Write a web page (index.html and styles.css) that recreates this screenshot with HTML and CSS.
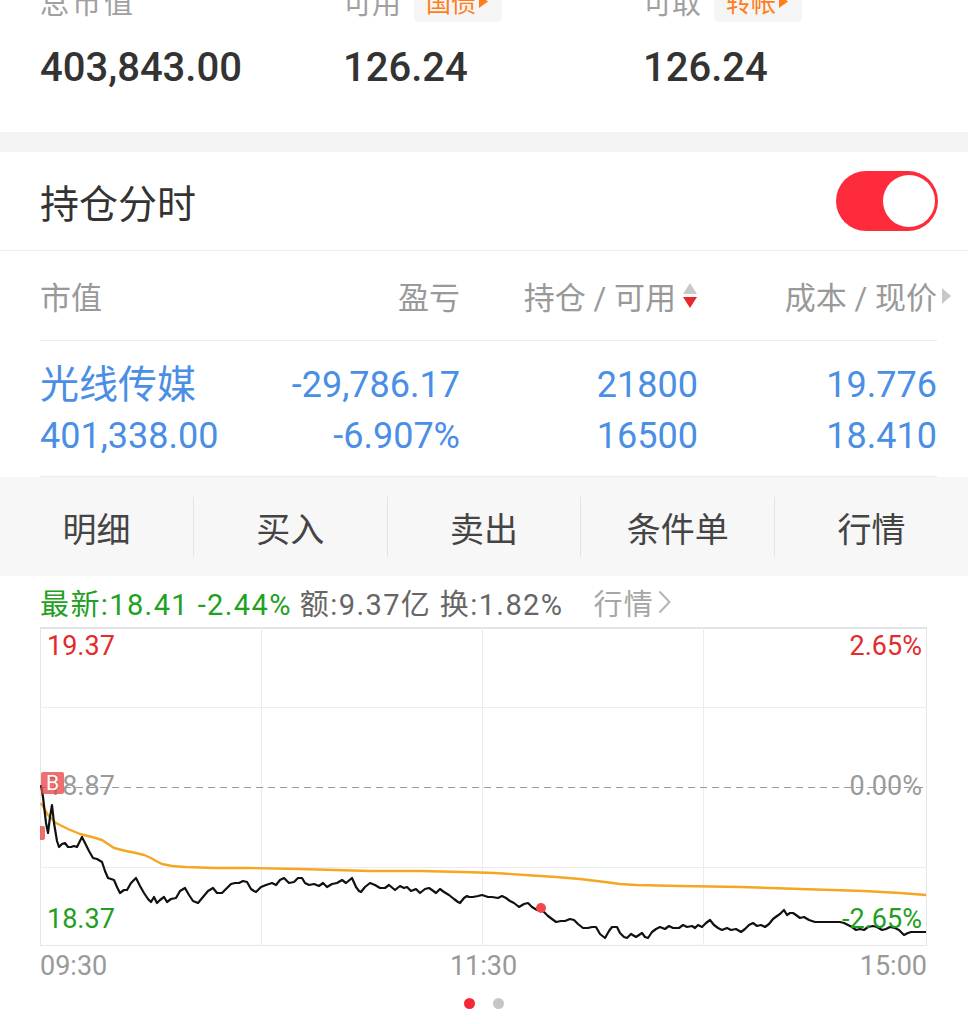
FILE: index.html
```html
<!DOCTYPE html>
<html lang="zh-CN">
<head>
<meta charset="utf-8">
<title>持仓分时</title>
<link rel="stylesheet" href="styles.css">
</head>
<body>
<div class="page">
  <section class="summary">
    <div class="sum-col">
      <div class="sum-label"><span class="wide">总市值</span></div>
      <div class="sum-value">403,843.00</div>
    </div>
    <div class="sum-col">
      <div class="sum-label"><span>可用</span><span class="tag">国债<svg class="tag-arrow" width="9" height="13" viewBox="0 0 9 13"><path d="M0 0 L9 6.5 L0 13 Z" fill="#ff7d1a"/></svg></span></div>
      <div class="sum-value">126.24</div>
    </div>
    <div class="sum-col">
      <div class="sum-label"><span>可取</span><span class="tag">转帐<svg class="tag-arrow" width="9" height="13" viewBox="0 0 9 13"><path d="M0 0 L9 6.5 L0 13 Z" fill="#ff7d1a"/></svg></span></div>
      <div class="sum-value">126.24</div>
    </div>
  </section>

  <div class="gap-band"></div>

  <section class="title-row">
    <h2 class="title">持仓分时</h2>
    <div class="toggle"><span class="knob"></span></div>
  </section>

  <section class="holdings">
    <div class="hold-head">
      <span class="c1">市值</span>
      <span class="c2">盈亏</span>
      <span class="c3">持仓 / 可用<svg class="sort" width="16" height="28" viewBox="0 0 16 28"><path d="M8 1 L15 12 L1 12 Z" fill="#c8c8c8"/><path d="M1 15 L15 15 L8 26 Z" fill="#e8282d"/></svg></span>
      <span class="c4">成本 / 现价<svg class="more" width="9" height="16" viewBox="0 0 9 16"><path d="M0 0 L9 8 L0 16 Z" fill="#c8c8c8"/></svg></span>
    </div>
    <div class="hold-row">
      <span class="c1 name">光线传媒</span>
      <span class="c2">-29,786.17</span>
      <span class="c3">21800</span>
      <span class="c4">19.776</span>
      <span class="c1">401,338.00</span>
      <span class="c2">-6.907%</span>
      <span class="c3">16500</span>
      <span class="c4">18.410</span>
    </div>
  </section>

  <nav class="actions">
    <span class="act">明细</span>
    <span class="act">买入</span>
    <span class="act">卖出</span>
    <span class="act">条件单</span>
    <span class="act">行情</span>
  </nav>

  <div class="quote">
    <span class="q-up">最新:18.41 -2.44%</span>
    <span class="q-info">额:9.37亿 换:1.82%</span>
    <span class="q-link">行情<svg class="q-arrow" width="13" height="24" viewBox="0 0 13 24"><path d="M1.5 1.5 L11.5 12 L1.5 22.5" fill="none" stroke="#b5b5b5" stroke-width="2"/></svg></span>
  </div>

  <div class="chart">
    <svg class="chart-svg" width="887" height="319" viewBox="0 0 887 319">
      <rect x="0.5" y="0.5" width="886" height="318" fill="#fff" stroke="#e6e6e6" stroke-width="1"/>
      <line x1="0" y1="1" x2="887" y2="1" stroke="#e3e3e3" stroke-width="2"/>
      <line x1="0" y1="80.5" x2="887" y2="80.5" stroke="#ececec"/>
      <line x1="0" y1="240.5" x2="887" y2="240.5" stroke="#ececec"/>
      <line x1="221.5" y1="0" x2="221.5" y2="319" stroke="#ececec"/>
      <line x1="442.5" y1="0" x2="442.5" y2="319" stroke="#ececec"/>
      <line x1="663.5" y1="0" x2="663.5" y2="319" stroke="#ececec"/>
      <line x1="0" y1="160.5" x2="887" y2="160.5" stroke="#9a9a9a" stroke-dasharray="7 5"/>
      <polyline fill="none" stroke="#f5a623" stroke-width="2.4" stroke-linejoin="round"
        points="1,176 8,188 16,196 28,202 40,207 52,210 62,213 68,217 74,221 86,224 96,226 104,228 111,231 116,234 122,237 132,239 145,240 175,241 207,241 260,242 330,244 380,244 423,245 455,246 485,248 516,250 540,252 565,255 580,257 596,258 640,259 701,260 760,262 824,264 860,266 886,268"/>
      <polyline fill="none" stroke="#111" stroke-width="2.2" stroke-linejoin="round"
        points="1,158 3,170 6,196 8,206 10,190 12,178 14,196 17,214 19,220 22,217 25,216 28,220 31,220 34,219 37,220 40,214 42,210 45,216 49,224 53,231 57,232 62,235 65,244 68,251 71,252 74,253 77,260 80,266 84,263 87,263 91,256 96,251 100,259 104,266 108,272 111,275 114,270 117,276 120,273 124,270 127,275 131,272 136,271 140,264 145,261 149,268 153,274 158,276 163,270 168,264 173,261 177,266 182,266 186,262 191,257 195,256 199,256 203,254 207,255 211,262 214,264 216,265 221,260 226,258 232,256 236,258 240,253 244,251 249,256 254,255 258,251 262,251 265,256 269,258 274,257 279,259 283,256 287,260 292,257 297,256 302,253 306,256 312,251 316,260 319,264 321,265 325,260 330,256 335,258 340,261 345,261 349,258 355,263 360,259 364,261 367,260 371,264 376,262 380,266 385,262 389,261 392,263 396,266 400,262 404,265 409,268 414,272 418,275 420,276 424,271 427,269 429,270 433,270 438,269 442,268 448,270 452,270 458,271 462,269 466,271 470,274 474,276 479,280 484,277 488,276 492,280 497,283 501,281 504,285 508,289 512,292 516,295 521,294 525,294 530,292 534,293 538,297 543,301 548,301 552,300 556,300 560,307 565,311 569,304 572,300 577,300 580,306 584,310 587,311 591,307 596,310 599,308 602,306 605,310 608,311 612,305 616,302 620,300 625,302 629,299 633,301 639,301 643,298 647,300 652,299 655,301 658,298 662,300 666,296 670,293 674,298 678,301 682,303 687,301 691,303 696,302 701,305 705,302 709,298 713,296 717,299 721,298 725,300 729,297 733,292 737,289 740,287 744,283 747,288 750,286 753,286 756,288 760,291 764,290 769,293 772,294 775,295 785,295 795,295 800,295 804,296 808,298 812,300 816,303 820,302 824,303 828,300 833,299 837,300 842,303 846,302 850,300 855,301 859,303 862,306 864,308 868,306 871,305 876,305 886,305"/>
      <circle cx="501" cy="281" r="5" fill="#f04848"/>
    </svg>
    <span class="cl cl-tl up">19.37</span>
    <span class="cl cl-tr up">2.65%</span>
    <span class="cl cl-ml">18.87</span>
    <span class="cl cl-mr">0.00%</span>
    <span class="cl cl-bl down">18.37</span>
    <span class="cl cl-br down">-2.65%</span>
    <span class="mark-b">B</span>
    <span class="mark-s"></span>
  </div>

  <div class="time-axis">
    <span>09:30</span>
    <span>11:30</span>
    <span>15:00</span>
  </div>

  <div class="dots">
    <span class="dot active"></span>
    <span class="dot"></span>
  </div>
</div>
</body>
</html>
```

FILE: styles.css
```css
* { box-sizing: border-box; }

html, body {
  margin: 0;
  padding: 0;
  background: #fff;
}

body {
  font-family: Roboto, "Noto Sans CJK SC", sans-serif;
  color: #333;
  width: 968px;
  overflow: hidden;
}

.page {
  width: 968px;
}

/* summary */
.summary {
  display: grid;
  grid-template-columns: 303px 300px 325px;
  padding: 0 0 40px 40px;
  margin-top: -14px;
}

.sum-label {
  display: flex;
  align-items: center;
  height: 36px;
  font-size: 29px;
  line-height: 36px;
  color: #a0a0a0;
}

.sum-label .wide {
  letter-spacing: 3px;
}

.tag {
  display: inline-flex;
  align-items: center;
  height: 36px;
  margin-left: 13px;
  padding: 0 14px 0 12px;
  background: #f5f5f5;
  border-radius: 5px;
  color: #ff7d1a;
  font-size: 25px;
  line-height: 36px;
}

.tag-arrow {
  margin-left: 3px;
  margin-bottom: 6px;
}

.sum-value {
  margin-top: 22px;
  font-size: 40px;
  font-weight: 500;
  line-height: 48px;
  color: #333;
}

.gap-band {
  height: 20px;
  background: #f4f4f4;
}

/* title */
.title-row {
  display: flex;
  align-items: center;
  justify-content: space-between;
  height: 99px;
  padding: 0 30px 0 40px;
  border-bottom: 1px solid #ececec;
}

.title {
  margin: 0;
  font-size: 39px;
  font-weight: 400;
  color: #333;
}

.toggle {
  position: relative;
  width: 102px;
  height: 60px;
  border-radius: 30px;
  background: #fe2b3c;
}

.knob {
  position: absolute;
  right: 3px;
  top: 4px;
  width: 52px;
  height: 52px;
  border-radius: 50%;
  background: #fff;
}

/* holdings */
.holdings {
  margin: 0 31px 0 40px;
}

.hold-head,
.hold-row {
  display: grid;
  grid-template-columns: 220px 200px 238px 239px;
}

.hold-head {
  height: 90px;
  align-items: center;
  border-bottom: 1px solid #ececec;
  font-size: 31px;
  color: #999;
}

.hold-head .c3,
.hold-head .c4 {
  display: flex;
  align-items: center;
  justify-content: flex-end;
}

.sort {
  margin-left: 6px;
}

.more {
  margin-left: 5px;
  margin-right: -14px;
}

.hold-row {
  padding: 19px 0 14px;
  border-bottom: 1px solid #ececec;
  font-size: 36px;
  line-height: 51px;
  color: #4a8ee6;
}

.hold-row .name {
  font-size: 39px;
}

.c1 { text-align: left; }
.c2, .c3, .c4 { text-align: right; }

/* actions */
.actions {
  display: flex;
  padding: 20px 0 19px;
  background: #f7f7f7;
}

.act {
  flex: 1;
  height: 60px;
  display: flex;
  align-items: center;
  justify-content: center;
  font-size: 34px;
  color: #444;
}

.act + .act {
  border-left: 1px solid #e4e4e4;
}

/* quote line */
.quote {
  display: flex;
  align-items: center;
  height: 51px;
  padding: 0 0 0 40px;
  font-size: 29px;
  letter-spacing: 1.4px;
  white-space: nowrap;
}

.q-up { color: #22a022; }

.q-info {
  margin-left: 8px;
  color: #666;
}

.q-link {
  display: inline-flex;
  align-items: center;
  margin-left: 30px;
  color: #a6a6a6;
}

.q-arrow { margin-left: 4px; }

/* chart */
.chart {
  position: relative;
  width: 887px;
  height: 319px;
  margin-left: 40px;
}

.chart-svg {
  display: block;
}

.cl {
  position: absolute;
  font-size: 27px;
  line-height: 30px;
  color: #9a9a9a;
}

.cl.up { color: #e42b2b; }
.cl.down { color: #1f9e1f; }

.cl-tl { left: 7px; top: 4px; }
.cl-tr { right: 5px; top: 4px; }
.cl-ml { left: 7px; top: 144px; }
.cl-mr { right: 5px; top: 144px; }
.cl-bl { left: 7px; top: 277px; }
.cl-br { right: 5px; top: 277px; }

.mark-b {
  position: absolute;
  left: 1px;
  top: 145px;
  width: 23px;
  height: 22px;
  border-radius: 2px;
  background: rgba(232, 70, 72, 0.78);
  color: #fff;
  font-size: 21px;
  line-height: 22px;
  text-align: center;
}

.mark-s {
  position: absolute;
  left: 0;
  top: 199px;
  width: 5px;
  height: 14px;
  border-radius: 0 2px 2px 0;
  background: rgba(232, 70, 72, 0.78);
}

/* time axis */
.time-axis {
  display: flex;
  justify-content: space-between;
  margin: 0 41px 0 40px;
  height: 40px;
  font-size: 27px;
  line-height: 40px;
  color: #999;
}

/* page dots */
.dots {
  display: flex;
  justify-content: center;
  gap: 18px;
  margin-top: 12px;
}

.dot {
  width: 11px;
  height: 11px;
  border-radius: 50%;
  background: #c6c6c6;
}

.dot.active { background: #f5283a; }
```
